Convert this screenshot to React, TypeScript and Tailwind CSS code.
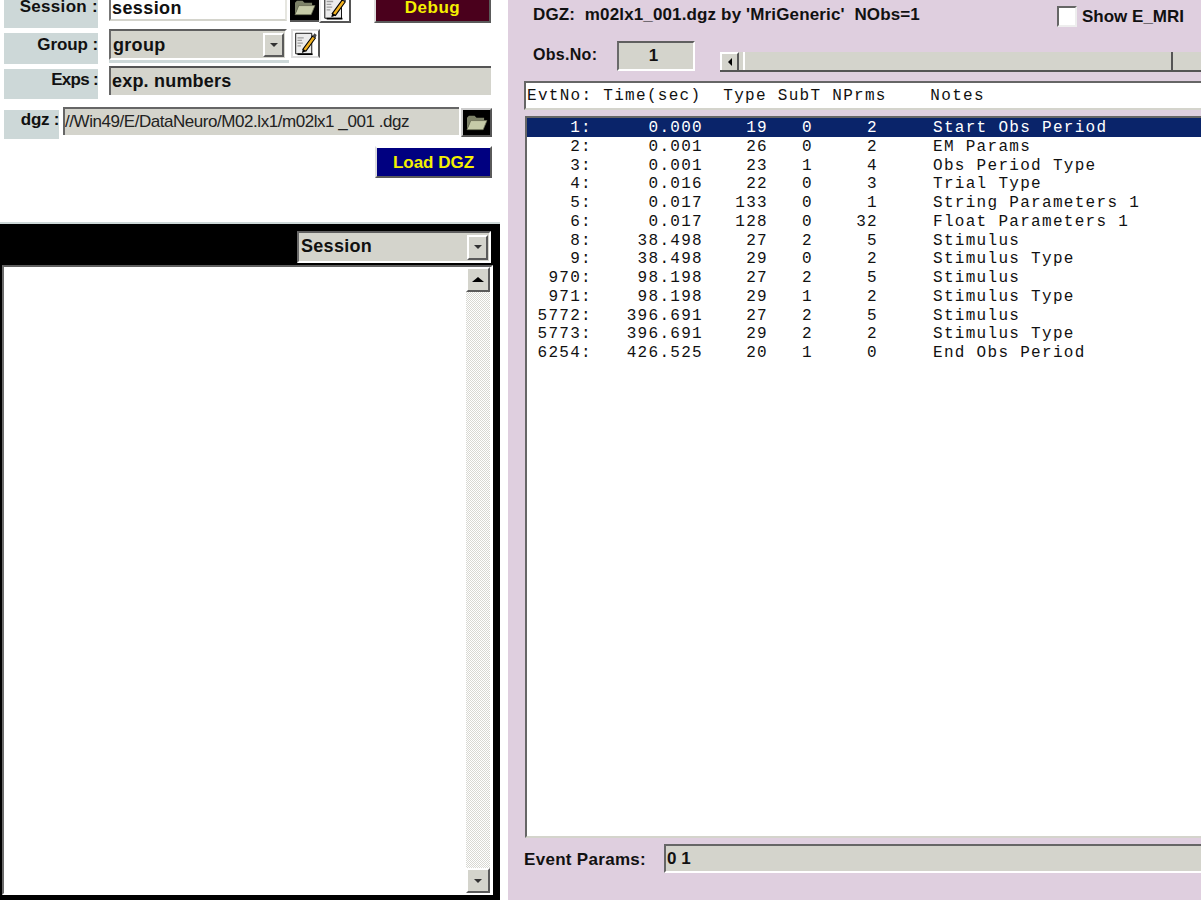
import React from "react";

const sans = "font-['Liberation_Sans',Arial,sans-serif]";
const sunken = "border-2 border-t-[#5f5f5f] border-l-[#6a6a6a] border-b-white border-r-white";
const raised = "border-2 border-t-white border-l-white border-b-[#5a5a5a] border-r-[#5a5a5a]";

const FolderIcon = () => (
  <svg viewBox="0 0 24 20" className="w-[23px] h-[19px]">
    <path d="M2 17 L2 5 L4 3 L10 3 L12 5 L20 5 L20 8 L6 8 Z" fill="#7d8268" />
    <path d="M2 17.5 L6 8 L23 8 L19 17.5 Z" fill="#c6cba8" stroke="#6f7358" strokeWidth="0.8" />
  </svg>
);

const NoteIcon = () => (
  <svg viewBox="0 0 28 28" className="w-[26px] h-[26px]">
    <path d="M3 2 H21 V25 H3 Z" fill="#ececec" stroke="#000" strokeWidth="1" />
    <path d="M5 7 H12 M5 10 H10 M5 13 H11 M5 16 H9" stroke="#a0a0a0" strokeWidth="1.4" />
    <path d="M5 25.5 H22" stroke="#000" strokeWidth="1.8" />
    <path d="M11 20 L22 5 L25 7.5 L14.5 22 Z" fill="#f0b020" stroke="#000" strokeWidth="1.2" />
    <path d="M22 5 L25 7.5 L26.5 4 L24 2 Z" fill="#444" />
    <path d="M11 20 L10 24 L14.5 22 Z" fill="#000" />
  </svg>
);

const Arrow = ({ dir }: { dir: "up" | "down" | "left" }) => {
  const cls =
    dir === "up"
      ? "border-x-[6px] border-x-transparent border-b-[5px] border-b-black"
      : dir === "down"
        ? "border-x-[4px] border-x-transparent border-t-[4px] border-t-[#333]"
        : "border-y-[4px] border-y-transparent border-r-[4px] border-r-black";
  return <span className={`block w-0 h-0 ${cls}`} />;
};

const ArrowBtn = ({ dir, className }: { dir: "up" | "down" | "left"; className: string }) => (
  <div className={`flex items-center justify-center bg-[#d4d4cc] shrink-0 ${raised} ${className}`}>
    <Arrow dir={dir} />
  </div>
);

const Label = ({ text, className }: { text: string; className: string }) => (
  <div className={`bg-[#cdd8d8] text-right font-bold text-[17px] text-[#111] whitespace-pre shrink-0 ${className}`}>
    {text}
  </div>
);

const rows: [string, string, string, string, string, string][] = [
  ["1:", "0.000", "19", "0", "2", "Start Obs Period"],
  ["2:", "0.001", "26", "0", "2", "EM Params"],
  ["3:", "0.001", "23", "1", "4", "Obs Period Type"],
  ["4:", "0.016", "22", "0", "3", "Trial Type"],
  ["5:", "0.017", "133", "0", "1", "String Parameters 1"],
  ["6:", "0.017", "128", "0", "32", "Float Parameters 1"],
  ["8:", "38.498", "27", "2", "5", "Stimulus"],
  ["9:", "38.498", "29", "0", "2", "Stimulus Type"],
  ["970:", "98.198", "27", "2", "5", "Stimulus"],
  ["971:", "98.198", "29", "1", "2", "Stimulus Type"],
  ["5772:", "396.691", "27", "2", "5", "Stimulus"],
  ["5773:", "396.691", "29", "2", "2", "Stimulus Type"],
  ["6254:", "426.525", "20", "1", "0", "End Obs Period"],
];

export default function App() {
  return (
    <div className={`flex w-[1201px] h-[900px] overflow-hidden bg-white ${sans}`}>
      {/* Left */}
      <div className="w-[500px] h-[900px] flex flex-col shrink-0 overflow-hidden">
        <div className="flex-1 flex flex-col min-h-0">
          <div className="flex h-[37px] -mt-[8px] items-start shrink-0">
            <Label text="Session :" className="ml-[4px] w-[94px] h-[36px] pt-[8px] leading-[14px] tracking-[0.3px]" />
            <div className="ml-[11px] w-[178px] h-[29px] border-2 border-l-[#777] border-t-[#777] border-b-[#d4d4cc] border-r-[#e6e6e0] bg-white font-bold text-[18px] leading-[16px] pl-[1px] pt-[6px] tracking-[0.4px] text-[#111]">
              session
            </div>
            <div className="ml-[3px] w-[29px] h-[30px] bg-black border-b-2 border-[#555] flex items-end justify-center pb-[3px] shrink-0">
              <FolderIcon />
            </div>
            <div className="w-[32px] h-[31px] bg-white border-2 border-l-[#eee] border-t-white border-r-[#555] border-b-[#555] flex items-end justify-center shrink-0">
              <NoteIcon />
            </div>
            <div className="ml-[23px] w-[117px] h-[31px] bg-[#4a001c] border-2 border-t-white border-l-[#ddd] border-b-[#5a5a5a] border-r-[#5a5a5a] text-center text-[#f4f000] font-bold text-[17px] leading-[16px] pt-[6px] tracking-[0.5px] shrink-0">
              Debug
            </div>
          </div>

          <div className="flex h-[37px] items-start shrink-0">
            <Label text="Group :" className="ml-[4px] w-[94px] h-[31px] mt-[4px] pt-[2px] leading-[20px] tracking-[-0.1px]" />
            <div className="ml-[11px] w-[180px] h-[34px] border-b-[3px] border-[#cdd8d8] shrink-0">
              <div className={`w-[178px] h-[31px] bg-[#d4d4cc] flex items-center justify-between pr-[1px] ${sunken}`}>
                <span className="font-bold text-[18px] leading-[20px] pl-[2px] tracking-[0.3px] text-[#111]">group</span>
                <ArrowBtn dir="down" className="w-[21px] h-[24px]" />
              </div>
            </div>
            <div className="ml-[2px] w-[29px] h-[29px] bg-white border-2 border-l-[#ddd] border-t-[#ddd] border-r-[#555] border-b-[#ddd] flex items-center justify-center shrink-0">
              <NoteIcon />
            </div>
          </div>

          <div className="flex h-[41px] items-start shrink-0">
            <Label text="Exps :" className="ml-[4px] w-[94px] h-[30px] mt-[3px] pt-[1px] leading-[20px] tracking-[-0.7px]" />
            <div className="ml-[11px] w-[382px] h-[29px] bg-[#d4d4cc] border-t-2 border-l-2 border-t-[#555] border-l-[#666] font-bold text-[18px] leading-[27px] pl-[1px] tracking-[0.2px] text-[#111] shrink-0">
              exp. numbers
            </div>
          </div>

          <div className="flex h-[39px] items-start shrink-0">
            <Label text="dgz :" className="ml-[4px] w-[55px] h-[29px] mt-[3px] leading-[20px] tracking-[-0.3px]" />
            <div className="ml-[4px] w-[396px] h-[28px] bg-[#d4d4cc] border-t-2 border-l-2 border-t-[#666] border-l-[#666] text-[17px] leading-[25px] tracking-[-0.45px] text-[#222] whitespace-pre shrink-0 overflow-hidden">
              //Win49/E/DataNeuro/M02.lx1/m02lx1 _001 .dgz
            </div>
            <div className="ml-[2px] mt-[1px] w-[31px] h-[29px] bg-black border-2 border-t-[#ccc] border-l-[#ccc] border-b-[#555] border-r-[#555] flex items-center justify-center shrink-0">
              <FolderIcon />
            </div>
          </div>

          <div className="flex justify-end pr-[8px] shrink-0">
            <div className="w-[117px] h-[32px] bg-[#000080] border-2 border-t-white border-l-[#ddd] border-b-[#5a5a5a] border-r-[#5a5a5a] text-center text-[#f4f000] font-bold text-[17px] leading-[29px]">
              Load DGZ
            </div>
          </div>
        </div>

        <div className="h-[678px] shrink-0 border-t-2 border-[#cdd8d8] bg-black flex flex-col pt-[7px]">
          <div className="flex justify-end pr-[9px] shrink-0">
            <div className={`w-[194px] h-[32px] bg-[#d4d4cc] flex items-center justify-between pr-[1px] ${sunken}`}>
              <span className="font-bold text-[18px] leading-[24px] -mt-[2px] pl-[2px] tracking-[0.3px] text-[#111]">Session</span>
              <ArrowBtn dir="down" className="w-[21px] h-[25px]" />
            </div>
          </div>
          <div className={`mt-[2px] ml-[2px] w-[491px] h-[630px] bg-white flex justify-end pr-[1px] ${sunken} border-r-[#d4d4cc] border-b-[#d4d4cc]`}>
            <div className="w-[24px] h-full flex flex-col bg-[repeating-conic-gradient(#d8d8d2_0_25%,#ffffff_0_50%)] bg-[length:2px_2px]">
              <ArrowBtn dir="up" className="w-[24px] h-[25px]" />
              <div className="flex-1" />
              <ArrowBtn dir="down" className="w-[24px] h-[25px]" />
            </div>
          </div>
        </div>
      </div>

      <div className="w-[8px] shrink-0 bg-white" />

      {/* Right */}
      <div className="w-[693px] h-[900px] shrink-0 bg-[#dfcfdf] overflow-hidden flex flex-col text-[#111]">
        <div className="h-[41px] flex items-start shrink-0 pl-[25px]">
          <div className="font-bold text-[17px] leading-[18px] mt-[6px] whitespace-pre tracking-[0.14px] w-[524px] shrink-0">
            DGZ:  m02lx1_001.dgz by 'MriGeneric'  NObs=1
          </div>
          <div className="mt-[6px] w-[20px] h-[21px] bg-white border-2 border-t-[#666] border-l-[#666] border-b-[#eee] border-r-[#eee] shrink-0" />
          <div className="ml-[5px] mt-[7px] font-bold text-[17px] leading-[20px] whitespace-pre shrink-0">Show E_MRI</div>
        </div>

        <div className="h-[40px] flex items-start shrink-0 pl-[25px]">
          <div className="w-[84px] font-bold text-[16px] tracking-[0.3px] leading-[18px] mt-[5px] shrink-0">Obs.No:</div>
          <div className={`w-[78px] h-[30px] bg-[#d4d4cc] text-center font-bold text-[17px] leading-[26px] pr-[5px] shrink-0 ${sunken} border-r-[#d4d4cc]`}>1</div>
          <div className="ml-[25px] mt-[11px] flex-1 h-[20px] flex border-b-2 border-[#555] bg-[#d4d4cc] min-w-0">
            <ArrowBtn dir="left" className="w-[19px] h-[18px] border-b-0" />
            <div className="w-[430px] h-[18px] bg-[#d4d4cc] border-l-2 border-white border-r-2 border-r-[#555] ml-[4px] shrink-0" />
          </div>
        </div>

        <div className="ml-[16px] h-[29px] bg-white shrink-0 border-2 border-t-[#666] border-l-[#666] border-r-0 border-b-[#d4d4cc] pl-[1px] font-['Liberation_Mono',monospace] text-[16px] leading-[26px] tracking-[1.3px] whitespace-pre">
          EvtNo: Time(sec)  Type SubT NPrms    Notes
        </div>

        <div className="mt-[6px] ml-[17px] h-[722px] bg-white shrink-0 border-t-2 border-l-2 border-t-[#666] border-l-[#666] border-b-2 border-b-[#d4d4cc] font-['Liberation_Mono',monospace] text-[16px] tracking-[1.3px]">
          {rows.map((r, i) => (
            <div
              key={i}
              className={`flex h-[18.75px] leading-[20px] whitespace-pre ${i === 0 ? "bg-[#0a246a] text-white" : "text-[#111]"}`}
            >
              <span className="w-[65px] text-right shrink-0">{r[0]}</span>
              <span className="w-[111px] text-right shrink-0">{r[1]}</span>
              <span className="w-[65px] text-right shrink-0">{r[2]}</span>
              <span className="w-[45px] text-right shrink-0">{r[3]}</span>
              <span className="w-[65px] text-right shrink-0">{r[4]}</span>
              <span className="ml-[55px] shrink-0">{r[5]}</span>
            </div>
          ))}
        </div>

        <div className="mt-[6px] flex items-start pl-[16px] shrink-0">
          <div className="w-[140px] font-bold text-[17px] tracking-[0.3px] leading-[20px] mt-[6px] shrink-0">Event Params:</div>
          <div className="flex-1 h-[29px] bg-[#d4d4cc] border-t-2 border-l-2 border-b-2 border-t-[#666] border-l-[#666] border-b-white font-bold text-[17px] leading-[25px] pl-[1px]">
            0 1
          </div>
        </div>
      </div>
    </div>
  );
}
